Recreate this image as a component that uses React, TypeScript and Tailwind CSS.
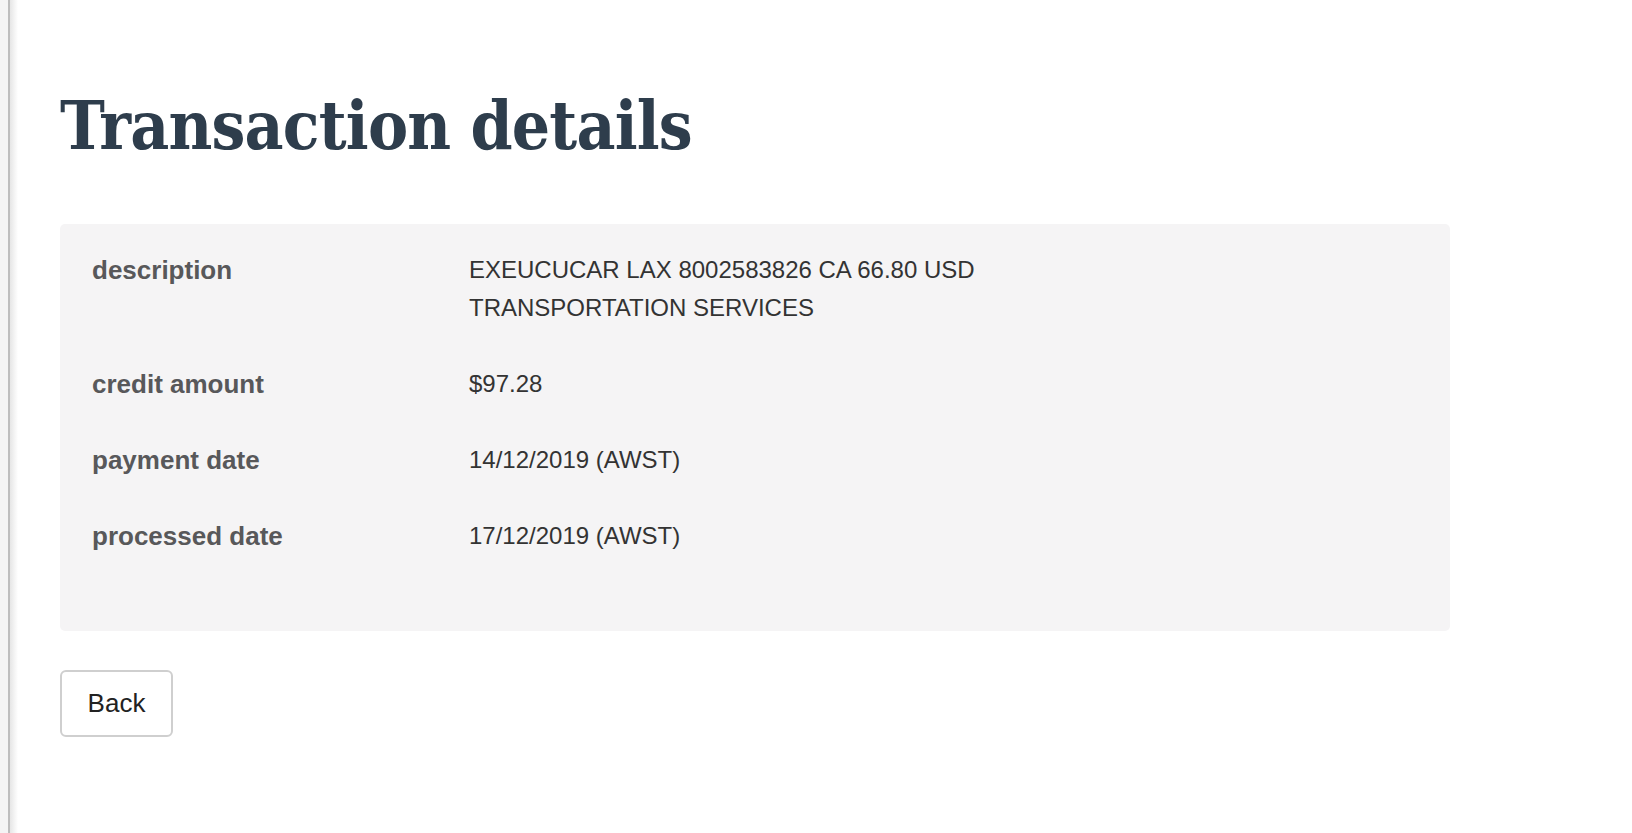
import React from "react";

const rows = [
  { label: "description", value: ["EXEUCUCAR LAX 8002583826 CA 66.80 USD", "TRANSPORTATION SERVICES"] },
  { label: "credit amount", value: ["$97.28"] },
  { label: "payment date", value: ["14/12/2019 (AWST)"] },
  { label: "processed date", value: ["17/12/2019 (AWST)"] },
];

export default function App() {
  return (
    <div className="flex min-h-[833px] w-full bg-white" style={{ fontFamily: '"Liberation Sans", Arial, sans-serif' }}>
      {/* side rail */}
      <div className="w-[8px] shrink-0 bg-[#f4f4f4]" />
      <div className="w-[2px] shrink-0 bg-[#bdbdbd]" />
      <div className="w-[8px] shrink-0 bg-gradient-to-r from-[#e6e6e6] to-white" />

      <main className="flex-1 pl-[42px] pt-[82px]">
        <h1
          className="text-[67px] font-bold leading-[88px] tracking-[-0.8px] text-[#2e3d4c]"
          style={{ fontFamily: '"DejaVu Serif Condensed", "DejaVu Serif", serif' }}
        >
          Transaction details
        </h1>

        <div className="mt-[54px] w-[1390px] rounded-[5px] bg-[#f5f4f5] pb-[76px] pl-[32px] pt-[27px]">
          <dl className="flex flex-col gap-[38px]">
            {rows.map((r) => (
              <div key={r.label} className="flex">
                <dt className="w-[377px] shrink-0 text-[26px] font-bold leading-[38px] text-[#58585a]">{r.label}</dt>
                <dd className="text-[24px] leading-[38px] text-[#333]">
                  {r.value.map((v) => (
                    <div key={v}>{v}</div>
                  ))}
                </dd>
              </div>
            ))}
          </dl>
        </div>

        <button className="mt-[39px] h-[67px] w-[113px] rounded-[6px] border-2 border-[#cfcfcf] bg-white text-[26px] text-[#222]">
          Back
        </button>
      </main>
    </div>
  );
}
